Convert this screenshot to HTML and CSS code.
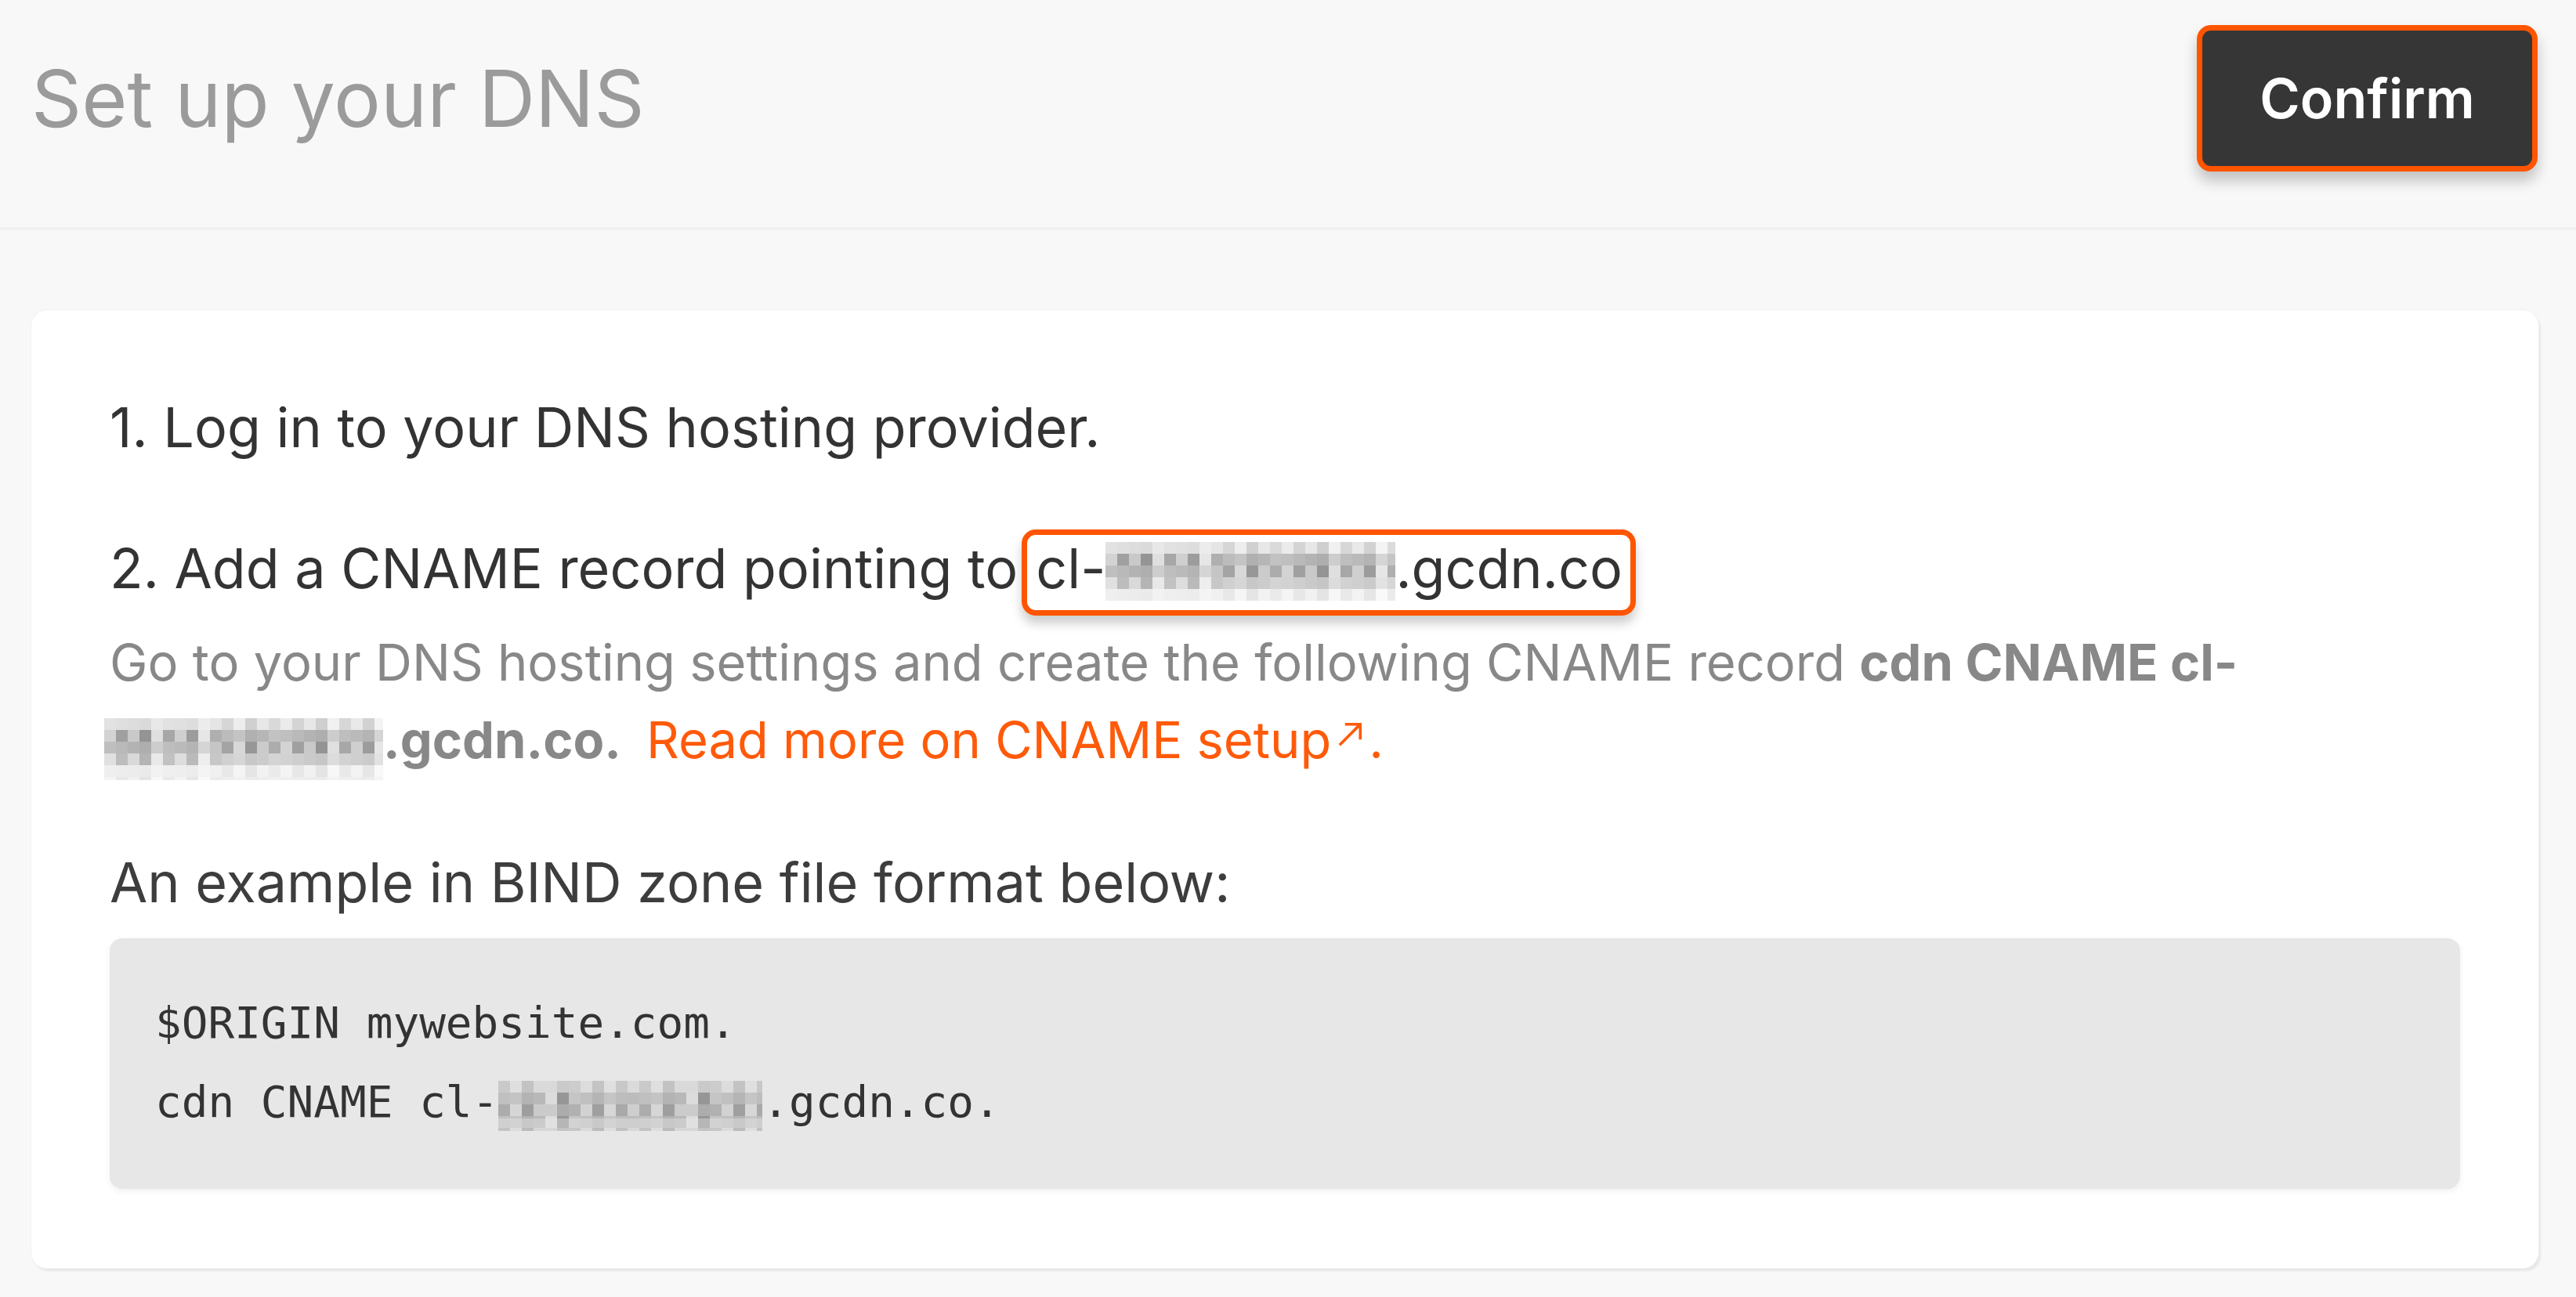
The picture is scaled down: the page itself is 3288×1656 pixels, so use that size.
FILE: index.html
```html
<!DOCTYPE html>
<html lang="en">
<head>
<meta charset="utf-8">
<title>Set up your DNS</title>
<link rel="stylesheet" href="styles.css">
</head>
<body>
<header class="topbar">
  <h1 class="title">Set up your DNS</h1>
  <button class="confirm" type="button">Confirm</button>
</header>
<main class="page">
  <section class="card">
    <p class="step">1. Log in to your DNS hosting provider.</p>
    <p class="step step-two">2. Add a CNAME record pointing to<span class="target">cl-<span class="mosaic mosaic-target"></span>.gcdn.co</span></p>
    <p class="hint">Go to your DNS hosting settings and create the following CNAME record <b class="strong">cdn CNAME cl-<span class="mosaic mosaic-hint"></span>.gcdn.co.</b><a class="link" href="#">Read more on CNAME setup<svg class="ext" viewBox="0 0 10 10" width="34" height="34" aria-hidden="true"><path d="M1.2 8.8 L8.2 1.8 M3.4 1.4 H8.6 V6.6" fill="none" stroke="currentColor" stroke-width="1.05" stroke-linecap="square"/></svg></a><span class="dot">.</span></p>
    <p class="step example">An example in BIND zone file format below:</p>
    <pre class="code"><code>$ORIGIN mywebsite.com.
cdn CNAME cl-<span class="mosaic mosaic-code"></span>.gcdn.co.</code></pre>
  </section>
</main>
</body>
</html>
```

FILE: styles.css
```css
* {
  box-sizing: border-box;
}

html, body {
  margin: 0;
  padding: 0;
  background: #f8f8f8;
}

body {
  font-family: Inter, "Noto Sans", "Liberation Sans", sans-serif;
  width: 3288px;
  min-height: 1656px;
}

.topbar {
  display: flex;
  align-items: center;
  justify-content: space-between;
  padding: 32px 49px 71px 40px;
  border-bottom: 4px solid #f0f0f0;
  background: #f8f8f8;
}

.title {
  margin: 0;
  font-size: 100px;
  font-weight: 400;
  color: #9b9b9b;
  line-height: 1.2;
}

.confirm {
  width: 435px;
  height: 187px;
  padding: 0;
  display: flex;
  align-items: center;
  justify-content: center;
  font-family: Inter, "Noto Sans", sans-serif;
  font-size: 70px;
  font-weight: 600;
  color: #ffffff;
  background: #363636;
  border: 7px solid #ff5500;
  border-radius: 18px;
  box-shadow: 0 12px 18px rgba(0, 0, 0, 0.22);
}

.page {
  padding: 102px 48px 0 40px;
}

.card {
  background: #ffffff;
  border-radius: 20px;
  padding: 100px 100px 101px 100px;
  box-shadow: 0 0 0 1px #f0f0f0, 3px 4px 3px rgba(0, 0, 0, 0.07);
}

.step {
  margin: 0;
  font-size: 70px;
  line-height: 100px;
  color: #333333;
}

.step-two {
  margin-top: 80px;
}

.target {
  margin-left: 5px;
  padding: 0 10px 11px 11px;
  border: 7px solid #ff5500;
  border-radius: 18px;
  background: #ffffff;
  box-shadow: 0 10px 14px rgba(0, 0, 0, 0.2);
}

.hint {
  margin: 20px 0 0 0;
  font-size: 65px;
  line-height: 99px;
  color: #888888;
}

.strong {
  font-weight: 700;
}

.link {
  margin-left: 32px;
  color: #ff5a0a;
  text-decoration: none;
}

.ext {
  display: inline-block;
  margin-left: 8px;
  vertical-align: 14px;
  color: #ff5a0a;
}

.dot {
  margin-left: 6px;
  color: #ff5a0a;
}

.example {
  margin-top: 81px;
  color: #3d3d3d;
}

.code {
  margin: 21px 0 0 0;
  padding: 57px 58px 61px 58px;
  background: #e7e7e7;
  border-radius: 16px;
  box-shadow: 0 3px 8px rgba(0, 0, 0, 0.06);
  font-family: "DejaVu Sans Mono", "Liberation Mono", monospace;
  font-size: 56px;
  line-height: 101px;
  color: #333333;
  white-space: pre;
}

.code code {
  font-family: inherit;
}

.mosaic {
  display: inline-block;
  background-image:
    linear-gradient(180deg, rgba(255, 255, 255, 0.55) 0 15px, rgba(255, 255, 255, 0) 15px 45px, rgba(255, 255, 255, 0.3) 45px 60px, rgba(255, 255, 255, 0.75) 60px),
    repeating-conic-gradient(rgba(255, 255, 255, 0.18) 0 25%, rgba(0, 0, 0, 0.05) 0 50%),
    linear-gradient(90deg, #c9c9c9 0 15px, #a9a9a9 15px 30px, #bdbdbd 30px 45px, #9c9c9c 45px 60px, #d8d8d8 60px 75px, #b0b0b0 75px 90px, #c4c4c4 90px 105px, #a4a4a4 105px 120px, #e0e0e0 120px 135px, #b8b8b8 135px 150px, #adadad 150px 165px, #cfcfcf 165px 180px, #9f9f9f 180px 195px, #c0c0c0 195px 210px, #b5b5b5 210px 225px);
  background-size: 100% 100%, 30px 30px, 225px 100%;
}

.mosaic-target {
  width: 370px;
  height: 75px;
  vertical-align: -16px;
}

.mosaic-hint {
  width: 356px;
  height: 79px;
  margin-left: -7px;
  vertical-align: -28px;
}

.mosaic-code {
  width: 337px;
  height: 64px;
  vertical-align: -18px;
  background-image:
    linear-gradient(180deg, rgba(231, 231, 231, 0.5) 0 15px, rgba(231, 231, 231, 0) 15px 48px, rgba(231, 231, 231, 0.4) 48px),
    repeating-conic-gradient(rgba(255, 255, 255, 0.15) 0 25%, rgba(0, 0, 0, 0.05) 0 50%),
    linear-gradient(90deg, #b5b5b5 0 15px, #cfcfcf 15px 30px, #a6a6a6 30px 45px, #c2c2c2 45px 60px, #d6d6d6 60px 75px, #9e9e9e 75px 90px, #bbbbbb 90px 105px, #cacaca 105px 120px, #a8a8a8 120px 135px, #d0d0d0 135px 150px, #b2b2b2 150px 165px, #c6c6c6 165px 180px);
  background-size: 100% 100%, 30px 30px, 180px 100%;
}
```
